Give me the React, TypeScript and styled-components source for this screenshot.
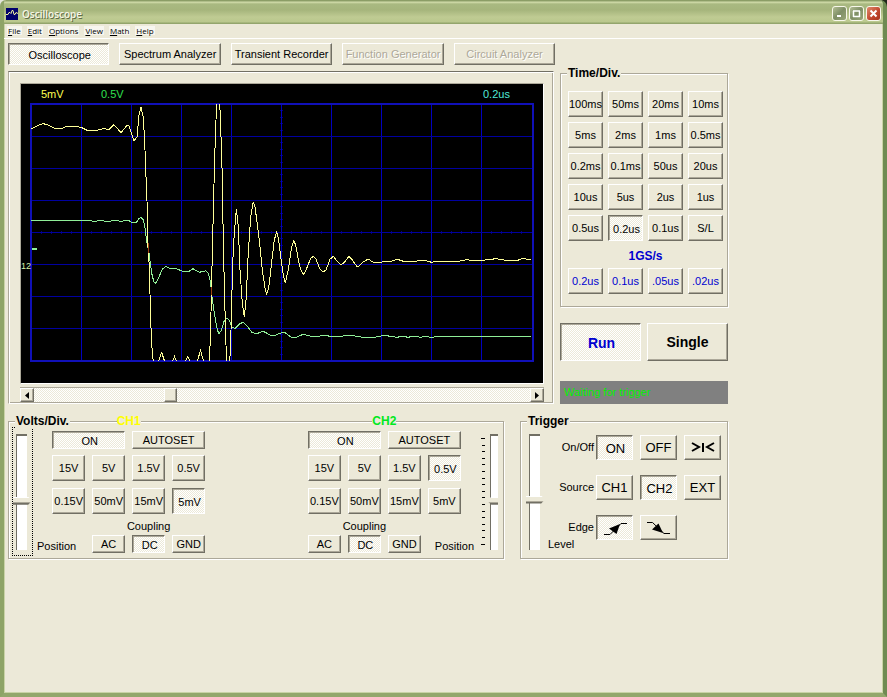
import React, { useState } from "react";
import styled, { createGlobalStyle, css } from "styled-components";

const FACE = "#ece9d8";
const SHADOW = "#aca899";
const DARK = "#716f64";
const CHECK = `repeating-conic-gradient(#ffffff 0 25%, ${FACE} 0 50%) 0 0 / 2px 2px`;

const GlobalStyle = createGlobalStyle`
  * { box-sizing: border-box; }
  body {
    margin: 0;
    background: linear-gradient(to right, #e4e6dc 50%, #20281a 50%);
    font-family: "Liberation Sans", Arial, sans-serif;
    font-size: 11px;
    line-height: 13px;
    color: #000;
  }
  button, input { font: inherit; margin: 0; padding: 0; }
`;

const Window = styled.div`
  min-height: 100vh;
  display: flex;
  flex-direction: column;
  background: ${FACE};
  border: solid #9aab72;
  border-width: 0 4px 4px;
  border-left-color: #8ea467;
  border-right-color: #6f8a52;
  border-bottom-color: #93a76c;
  border-radius: 6px 7px 0 0;
  box-shadow: inset 1px 0 #c9d3a6, inset -1px 0 #c9d3a6, inset 0 -1px #c9d3a6;
  overflow: hidden;
`;

const TitleBar = styled.header`
  display: flex;
  align-items: center;
  height: 24px;
  margin: 0 -4px;
  padding: 3px 6px 0;
  gap: 4px;
  background: linear-gradient(#8b9d66 0, #8b9d66 1px, #d5dfae 2px, #a9b981 4px, #a6b57c 10px, #bfcb93 17px, #bac88d 22px, #93a56c 23px, #93a56c 24px);
`;

const Title = styled.h1`
  flex: 1;
  margin: 0;
  font-size: 10px;
  line-height: 14px;
  font-family: "Open Sans", sans-serif;
  font-weight: 600;
  color: #f4f5e6;
  text-shadow: 1px 1px #5f6b45;
`;

const CaptionButton = styled.button<{ $close?: boolean }>`
  display: grid;
  place-items: center;
  width: 15px;
  height: 15px;
  margin-left: -2px;
  border: 1px solid #f7f7ea;
  border-radius: 3px;
  background: ${(p) =>
    p.$close
      ? "linear-gradient(135deg, #e08a6c, #c0452c 60%, #a8341e)"
      : "linear-gradient(135deg, #b2bd93, #7f8f66 50%, #98a677)"};
`;

const MenuBar = styled.nav`
  display: flex;
  gap: 5px;
  height: 15px;
  padding: 2px 3px 0;
  border-bottom: 1px solid #fff;
  font-family: "Open Sans", sans-serif;
  font-size: 8px;
  line-height: 9px;
`;

const MenuItem = styled.button`
  height: 9px;
  padding: 0 1px;
  border: 0;
  background: #f7f6ef;
  color: #000;
  &::first-letter { text-decoration: underline; }
`;

const Page = styled.main`
  display: flex;
  flex-direction: column;
  max-width: 724px;
  padding: 4px 0 0 4px;
`;

const pressed = css`
  border-color: ${DARK} #fff #fff ${DARK};
  background: ${CHECK};
  box-shadow: inset 1px 1px ${SHADOW};
  padding: 2px 0 0 2px;
`;

const PushButton = styled.button<{ $on?: boolean; $size?: "short" | "normal" | "tall" | "large"; $blue?: boolean }>`
  display: flex;
  align-items: center;
  justify-content: center;
  min-width: 0;
  height: ${(p) => ({ short: 18, normal: 26, tall: 25, large: 38 })[p.$size ?? "normal"]}px;
  border: 1px solid;
  border-color: #fff ${DARK} ${DARK} #fff;
  background: ${FACE};
  box-shadow: inset -1px -1px ${SHADOW};
  color: ${(p) => (p.$blue ? "#0000d0" : "#000")};
  font-size: ${(p) => ({ short: 11, normal: 11, tall: 13, large: 14 })[p.$size ?? "normal"]}px;
  font-weight: ${(p) => (p.$size === "large" ? 700 : 400)};
  white-space: nowrap;
  ${(p) => p.$on && pressed}
  &:disabled { color: #aca899; text-shadow: 1px 1px #fff; }
`;

const Tabs = styled.div`
  display: grid;
  grid-template-columns: repeat(5, 1fr);
  gap: 10px;
  width: 76%;
`;

const TabButton = styled(PushButton)`
  height: 22px;
`;

const Upper = styled.div`
  display: grid;
  grid-template-columns: minmax(0, 1fr) 168px;
  gap: 6px;
  margin-top: 6px;
`;

const ScopePanel = styled.section`
  padding: 11px 9px 1px 11px;
  border: 1px solid;
  border-color: ${DARK} #fff #fff ${SHADOW};
  box-shadow: inset 1px 1px #fff, inset -1px -1px ${SHADOW};
`;

const ScreenFrame = styled.div`
  border: 1px solid;
  border-color: ${SHADOW} #fff #fff ${SHADOW};
`;

const Screen = styled.svg`
  display: block;
  width: 100%;
  height: auto;
  background: #000;
`;

const ScrollBar = styled.div`
  display: flex;
  height: 15px;
  margin-top: 3px;
  border-top: 1px solid ${SHADOW};
  background: ${CHECK};
`;

const ScrollArrow = styled(PushButton)`
  width: 14px;
  height: 14px;
`;

const ScrollRange = styled.input`
  flex: 1;
  min-width: 0;
  height: 14px;
  appearance: none;
  background: none;
  &::-webkit-slider-thumb {
    appearance: none;
    width: 13px;
    height: 14px;
    border: 1px solid;
    border-color: #fff ${DARK} ${DARK} #fff;
    background: ${FACE};
    box-shadow: inset -1px -1px ${SHADOW};
  }
`;

const Side = styled.div`
  display: flex;
  flex-direction: column;
  padding-top: 2px;
`;

const GroupBox = styled.fieldset`
  position: relative;
  min-width: 0;
  margin: 0;
  padding: 0;
  border: 1px solid ${SHADOW};
  box-shadow: 1px 1px #fff, inset 1px 1px #fff;
`;

const Legend = styled.legend`
  position: absolute;
  top: -8px;
  left: 6px;
  padding: 0 1px;
  background: ${FACE};
  font-size: 12px;
  line-height: 14px;
  font-weight: 700;
`;

const TimeBody = styled.div`
  padding: 17px 4px 12px 7px;
`;

const TimeGrid = styled.div`
  display: grid;
  grid-template-columns: repeat(4, 1fr);
  gap: 5px;
`;

const RateLabel = styled.div`
  margin: 8px 0 5px;
  color: #0000d0;
  font-size: 12px;
  line-height: 14px;
  font-weight: 700;
  text-align: center;
`;

const RunRow = styled.div`
  display: grid;
  grid-template-columns: 1fr 1fr;
  gap: 6px;
  margin-top: 16px;
`;

const Status = styled.output`
  margin-top: auto;
  padding: 5px 4px;
  background: #808080;
  color: #00f000;
`;

const Lower = styled.div`
  display: grid;
  grid-template-columns: minmax(0, 1fr) 208px;
  gap: 16px;
  margin-top: 17px;
`;

const VoltsBox = styled(GroupBox)`
  display: flex;
  justify-content: space-between;
  height: 138px;
  padding: 0 4px 0 3px;
`;

const Cluster = styled.div`
  display: flex;
`;

const SliderFrame = styled.div<{ $focus?: boolean }>`
  margin-top: 5px;
  height: 129px;
  padding-top: 6px;
  border: 1px dotted ${(p) => (p.$focus ? "#000" : "transparent")};
`;

const VerticalSlider = styled.input<{ $left?: boolean }>`
  display: block;
  width: ${(p) => (p.$left ? 11 : 19)}px;
  height: 116px;
  appearance: none;
  writing-mode: vertical-lr;
  direction: rtl;
  background:
    linear-gradient(${DARK}, ${DARK}) 3px 0 / ${(p) => (p.$left ? 8 : 11)}px 2px no-repeat,
    linear-gradient(${DARK}, ${DARK}) 3px 0 / 1px 100% no-repeat,
    linear-gradient(#fff, #fff) 4px 0 / ${(p) => (p.$left ? 7 : 10)}px 100% no-repeat;
  &::-webkit-slider-runnable-track {
    width: 100%;
    height: 100%;
  }
  &::-webkit-slider-thumb {
    appearance: none;
    width: ${(p) => (p.$left ? 11 : 19)}px;
    height: 8px;
    border: 0;
    background: linear-gradient(#fff 1px, ${FACE} 1px, ${FACE} 5px, ${SHADOW} 5px, ${SHADOW} 6px, ${DARK} 6px);
    clip-path: ${(p) =>
      p.$left
        ? "polygon(0 50%, 40% 0, 100% 0, 100% 100%, 40% 100%)"
        : "polygon(0 0, 80% 0, 100% 50%, 80% 100%, 0 100%)"};
  }
`;

const FootLabel = styled.label`
  align-self: flex-end;
  margin-bottom: 5px;
`;

const Channel = styled.div`
  width: 153px;
`;

const ChannelTitle = styled.div<{ $color: string }>`
  width: max-content;
  height: 14px;
  margin: -8px auto 3px;
  background: ${FACE};
  color: ${(p) => p.$color};
  font-size: 12px;
  line-height: 14px;
  font-weight: 700;
`;

const ButtonGrid = styled.div<{ $cols: number }>`
  display: grid;
  grid-template-columns: repeat(${(p) => p.$cols}, 1fr);
  gap: 7px;
  margin-bottom: 6px;
`;

const CouplingRow = styled.div<{ $shift?: boolean }>`
  display: grid;
  grid-template-columns: repeat(3, 33px);
  gap: 2px 7px;
  justify-content: ${(p) => (p.$shift ? "end" : "start")};
`;

const CouplingLabel = styled.div`
  grid-column: 1 / -1;
  text-align: center;
`;

const TriggerBox = styled(GroupBox)`
  display: flex;
  padding-left: 4px;
`;

const TriggerGrid = styled.div`
  display: grid;
  grid-template-columns: 41px repeat(3, 37px);
  grid-template-rows: repeat(3, 25px) 0;
  gap: 15px 7px;
  align-items: center;
  margin: 13px 0 0 2px;
`;

const RowLabel = styled.span`
  margin-right: -5px;
  text-align: right;
`;

const LevelLabel = styled.label`
  grid-column: 1;
  align-self: start;
  margin-top: -17px;
`;

/* Samples beyond the plot's top and bottom edges are cut off by the clip path. */
const CH1_POINTS =
  "31,129 35,127 40,124.5 43,123.7 47,124.5 55,128.7 62,128.3 67,126 75,126 82,127.7 87,130.3 97,130.3 103,128.7 109,129.3 114,124.7 121,132.7 127,125.3 129,126 134,140.7 137,136.7 139,115 141,107.3 143,116 144.5,137 146,177 147.5,213 148,247 149.5,270 150.5,317 152,348 153.5,364 157.5,364 161.7,352.5 165.5,364 171.5,364 174.5,356.5 178,364 184,364 187.7,356.3 191,364 196.5,364 200.5,350.5 204.5,364 209,364 210.5,337 211.5,287 212.7,237 213.5,203 214.7,157 216,120 216.7,101 219.7,101 221,137 222.3,177 223.3,243 224.3,283 225.7,337 226.7,364 229.7,364 231,330 232.7,263 234.3,233 236.3,209 238.3,227 240,270 242.3,303 244.3,316.7 246.3,297 247.7,263 249.3,237 250.7,217 253.3,201.7 255,207 257.7,227 260,247 262.3,270 265,288 266.7,294.3 268.7,288 271.7,262 274.3,240 276.7,231.7 278.7,240 280.7,257 283.3,275 285.3,282.7 288.3,270 291.7,246.7 293.7,241 295.7,245 299.3,265 301.7,271.7 303.7,274.3 306.7,268.3 310.7,258.3 313.3,256.3 316,259 320,269.3 323.3,272 326,270 330,259.3 333.3,256.3 336.7,260.7 340.7,264.7 344,262.7 349,256.3 352.3,260 356.7,266.3 359.3,266 363.3,262 368.3,259 373.3,262.3 381,262.3 387,261 392,261 397.3,259.3 403.3,261.3 415,261.3 422.7,260 431.7,262.3 437,261.3 453.3,261.3 458,261.3 466.7,259.7 472,260.3 483,260.3 496,258.7 508.3,260.7 516.7,260.7 522.7,258.3 527,259.3 531,259.3";

const CH2_POINTS =
  "31,220.5 88,220.5 95,221.3 100,220.7 108,221.3 115,220.7 122,221.3 128,220 132,222.5 136,223 139,218.5 141,217.3 143.5,220 145,228 147,243 149,253 151.7,273.3 154,282.3 156,283.3 158.3,278.3 162.3,269.3 166,266.3 169.3,268 176.7,268.7 181.7,271 189,271.3 193,268.7 199.3,272.3 206,270.7 208.3,273.3 210.7,283.3 212,296.7 214.3,313.3 217.3,330 219,333.7 221,330.7 224.3,320.7 226.7,318.3 229.3,320 232,327.3 235.3,328.3 240,323.7 243,322.3 246.7,325.3 251.7,332.3 256.7,333.7 263.3,331.3 270,335 275.7,335 282.7,332.3 285,332.7 290.7,337 296.7,337 303.3,334.3 311.7,336.3 318,336.3 325,335.3 330,336.3 341.7,336.3 348.3,335 363.3,337.3 375,337.3 384,335.3 396.7,337.3 403,336.3 408,337.3 413.3,336.3 420.7,337.3 426,336.3 430.7,337.3 440,336.5 531,336.5";

const COLUMNS = [81, 131, 181, 231, 281, 331, 381, 431, 481];
const ROWS = [136, 168, 200, 232, 264, 296, 328];
const TICKS = Array.from({ length: 50 }, (_, i) => 31 + i * 10);
const SIDE_TICKS = Array.from({ length: 40 }, (_, i) => 104 + Math.round(i * 6.4));

function ScopeScreen() {
  return (
    <Screen viewBox="21 84 522 299" role="img" aria-label="Oscilloscope trace" fontSize={11}>
      <clipPath id="plot"><rect x={31} y={104} width={502} height={257} /></clipPath>
      <g fill="#000078" shapeRendering="crispEdges">
        {TICKS.map((x) => <rect key={x} x={x} y={231} width={1} height={3} />)}
        {SIDE_TICKS.map((y) => <rect key={y} x={280} y={y} width={3} height={1} />)}
      </g>
      <g shapeRendering="crispEdges">
        {COLUMNS.map((x) => <rect key={x} x={x} y={104} width={1} height={257} fill="#0000c0" />)}
        {ROWS.map((y) => <rect key={y} x={31} y={y} width={501} height={1} fill="#0000a0" />)}
      </g>
      <rect x={31} y={104} width={502} height={257} fill="none" stroke="#1010b8" strokeWidth={2} shapeRendering="crispEdges" />
      <g clipPath="url(#plot)" fill="none" shapeRendering="crispEdges">
        <polyline points={CH2_POINTS} stroke="#90ee98" />
        <polyline points={CH1_POINTS} stroke="#ffff98" />
        <path d="M148.5 243v10M211.5 287v8" stroke="#a04010" />
        <path d="M32 249h5" stroke="#90ee98" strokeWidth={2} />
      </g>
      <text x={41} y={98} fill="#ffff50">5mV</text>
      <text x={101} y={98} fill="#30e050">0.5V</text>
      <text x={483} y={98} fill="#50e8d8">0.2us</text>
      <text x={21} y={269} fill="#d8f0a8" fontSize={9}>12</text>
    </Screen>
  );
}

const VOLTS = ["15V", "5V", "1.5V", "0.5V", "0.15V", "50mV", "15mV", "5mV"];
const TIMES = [
  "100ms", "50ms", "20ms", "10ms", "5ms", "2ms", "1ms", "0.5ms", "0.2ms", "0.1ms",
  "50us", "20us", "10us", "5us", "2us", "1us", "0.5us", "0.2us", "0.1us", "S/L",
];

function ChannelControls({ name, color, initial, shift }: { name: string; color: string; initial: string; shift?: boolean }) {
  const [volts, setVolts] = useState(initial);
  const [coupling, setCoupling] = useState("DC");
  return (
    <Channel>
      <ChannelTitle $color={color}>{name}</ChannelTitle>
      <ButtonGrid $cols={2}>
        <PushButton $size="short" $on>ON</PushButton>
        <PushButton $size="short">AUTOSET</PushButton>
      </ButtonGrid>
      <ButtonGrid $cols={4}>
        {VOLTS.map((v) => (
          <PushButton key={v} $on={v === volts} onClick={() => setVolts(v)}>{v}</PushButton>
        ))}
      </ButtonGrid>
      <CouplingRow $shift={shift}>
        <CouplingLabel>Coupling</CouplingLabel>
        {["AC", "DC", "GND"].map((c) => (
          <PushButton key={c} $size="short" $on={c === coupling} onClick={() => setCoupling(c)}>{c}</PushButton>
        ))}
      </CouplingRow>
    </Channel>
  );
}

const Ch1Cluster = styled(Cluster)`
  gap: 4px;
  & > ${Channel} { margin-left: -28px; }
`;

const Ch2Cluster = styled(Cluster)`
  & > ${FootLabel} { margin-left: -26px; }
`;

const TickMarks = styled.svg`
  width: 6px;
  height: 116px;
  margin: 12px 0 0 6px;
`;

function EdgeIcon({ falling }: { falling?: boolean }) {
  return falling ? (
    <svg width="24" height="14" viewBox="0 0 24 14" fill="none" stroke="#000" aria-hidden="true">
      <path d="M0 1.500h5.500L17 12.500h6" />
      <path d="M5 8.500l6.500-6 4.500 9.500z" fill="#000" stroke="none" />
    </svg>
  ) : (
    <svg width="24" height="14" viewBox="0 0 24 14" fill="none" stroke="#000" aria-hidden="true">
      <path d="M0 12.500h6L17 1.500h6" />
      <path d="M5 6.500l11-4.500-3.500 10z" fill="#000" stroke="none" />
    </svg>
  );
}

export default function App() {
  const [time, setTime] = useState("0.2us");
  return (
    <>
      <GlobalStyle />
      <Window>
        <TitleBar>
          <svg width="12" height="12" viewBox="0 0 12 12" aria-hidden="true">
            <rect width="12" height="12" fill="#00006c" />
            <path d="M0 6.500h2l1-2h1l1 1 1-3h1l1 4h1l1-2 2 1" fill="none" stroke="#f0f0a0" />
          </svg>
          <Title>Oscilloscope</Title>
          <CaptionButton aria-label="Minimize">
            <svg width="9" height="9"><path d="M2 7h4" stroke="#fff" strokeWidth="2" /></svg>
          </CaptionButton>
          <CaptionButton aria-label="Maximize">
            <svg width="9" height="9"><path d="M1 2h7M1.500 2v6M7.500 2v6M1 7.500h7" stroke="#fff" strokeWidth="1.500" /></svg>
          </CaptionButton>
          <CaptionButton $close aria-label="Close">
            <svg width="9" height="9"><path d="M1.500 1.500l6 6M7.500 1.500l-6 6" stroke="#fff" strokeWidth="2" /></svg>
          </CaptionButton>
        </TitleBar>
        <MenuBar>
          {["File", "Edit", "Options", "View", "Math", "Help"].map((m) => <MenuItem key={m}>{m}</MenuItem>)}
        </MenuBar>
        <Page>
          <Tabs>
            <TabButton $on>Oscilloscope</TabButton>
            <TabButton>Spectrum Analyzer</TabButton>
            <TabButton>Transient Recorder</TabButton>
            <TabButton disabled>Function Generator</TabButton>
            <TabButton disabled>Circuit Analyzer</TabButton>
          </Tabs>
          <Upper>
            <ScopePanel>
              <ScreenFrame>
                <ScopeScreen />
              </ScreenFrame>
              <ScrollBar>
                <ScrollArrow aria-label="Scroll left"><svg width="4" height="7"><path d="M4 0v7L0 3.500z" /></svg></ScrollArrow>
                <ScrollRange type="range" aria-label="Horizontal position" defaultValue={27} />
                <ScrollArrow aria-label="Scroll right"><svg width="4" height="7"><path d="M0 0v7l4-3.500z" /></svg></ScrollArrow>
              </ScrollBar>
            </ScopePanel>
            <Side>
              <GroupBox>
                <Legend>Time/Div.</Legend>
                <TimeBody>
                  <TimeGrid>
                    {TIMES.map((t) => (
                      <PushButton key={t} $on={t === time} onClick={() => setTime(t)}>{t}</PushButton>
                    ))}
                  </TimeGrid>
                  <RateLabel>1GS/s</RateLabel>
                  <TimeGrid>
                    {["0.2us", "0.1us", ".05us", ".02us"].map((t) => <PushButton key={t} $blue>{t}</PushButton>)}
                  </TimeGrid>
                </TimeBody>
              </GroupBox>
              <RunRow>
                <PushButton $size="large" $on $blue>Run</PushButton>
                <PushButton $size="large">Single</PushButton>
              </RunRow>
              <Status>Waiting for trigger</Status>
            </Side>
          </Upper>
          <Lower>
            <VoltsBox>
              <Legend>Volts/Div.</Legend>
              <Ch1Cluster>
                <SliderFrame $focus>
                  <VerticalSlider id="pos1" type="range" defaultValue={42} />
                </SliderFrame>
                <FootLabel htmlFor="pos1">Position</FootLabel>
                <ChannelControls name="CH1" color="#ffff00" initial="5mV" shift />
              </Ch1Cluster>
              <Ch2Cluster>
                <ChannelControls name="CH2" color="#00e820" initial="0.5V" />
                <FootLabel htmlFor="pos2">Position</FootLabel>
                <TickMarks aria-hidden="true">
                  {Array.from({ length: 17 }, (_, i) => (
                    <rect key={i} x={i % 16 ? 2 : 1} y={4 + Math.round(i * 6.6)} width={i % 16 ? 3 : 4} height={1} />
                  ))}
                </TickMarks>
                <SliderFrame>
                  <VerticalSlider $left id="pos2" type="range" defaultValue={42} />
                </SliderFrame>
              </Ch2Cluster>
            </VoltsBox>
            <TriggerBox>
              <Legend>Trigger</Legend>
              <SliderFrame>
                <VerticalSlider id="level" type="range" defaultValue={43} />
              </SliderFrame>
              <TriggerGrid>
                <RowLabel>On/Off</RowLabel>
                <PushButton $size="tall" $on>ON</PushButton>
                <PushButton $size="tall">OFF</PushButton>
                <PushButton $size="tall" aria-label="Center trigger level">
                  <svg width="24" height="11" fill="none" stroke="#000" strokeWidth="2" aria-hidden="true">
                    <path d="M1 1l7 4-7 4M12 1v9M23 1l-7 4 7 4" />
                  </svg>
                </PushButton>
                <RowLabel>Source</RowLabel>
                <PushButton $size="tall">CH1</PushButton>
                <PushButton $size="tall" $on>CH2</PushButton>
                <PushButton $size="tall">EXT</PushButton>
                <RowLabel>Edge</RowLabel>
                <PushButton $size="tall" $on aria-label="Rising edge"><EdgeIcon /></PushButton>
                <PushButton $size="tall" aria-label="Falling edge"><EdgeIcon falling /></PushButton>
                <LevelLabel htmlFor="level">Level</LevelLabel>
              </TriggerGrid>
            </TriggerBox>
          </Lower>
        </Page>
      </Window>
    </>
  );
}
